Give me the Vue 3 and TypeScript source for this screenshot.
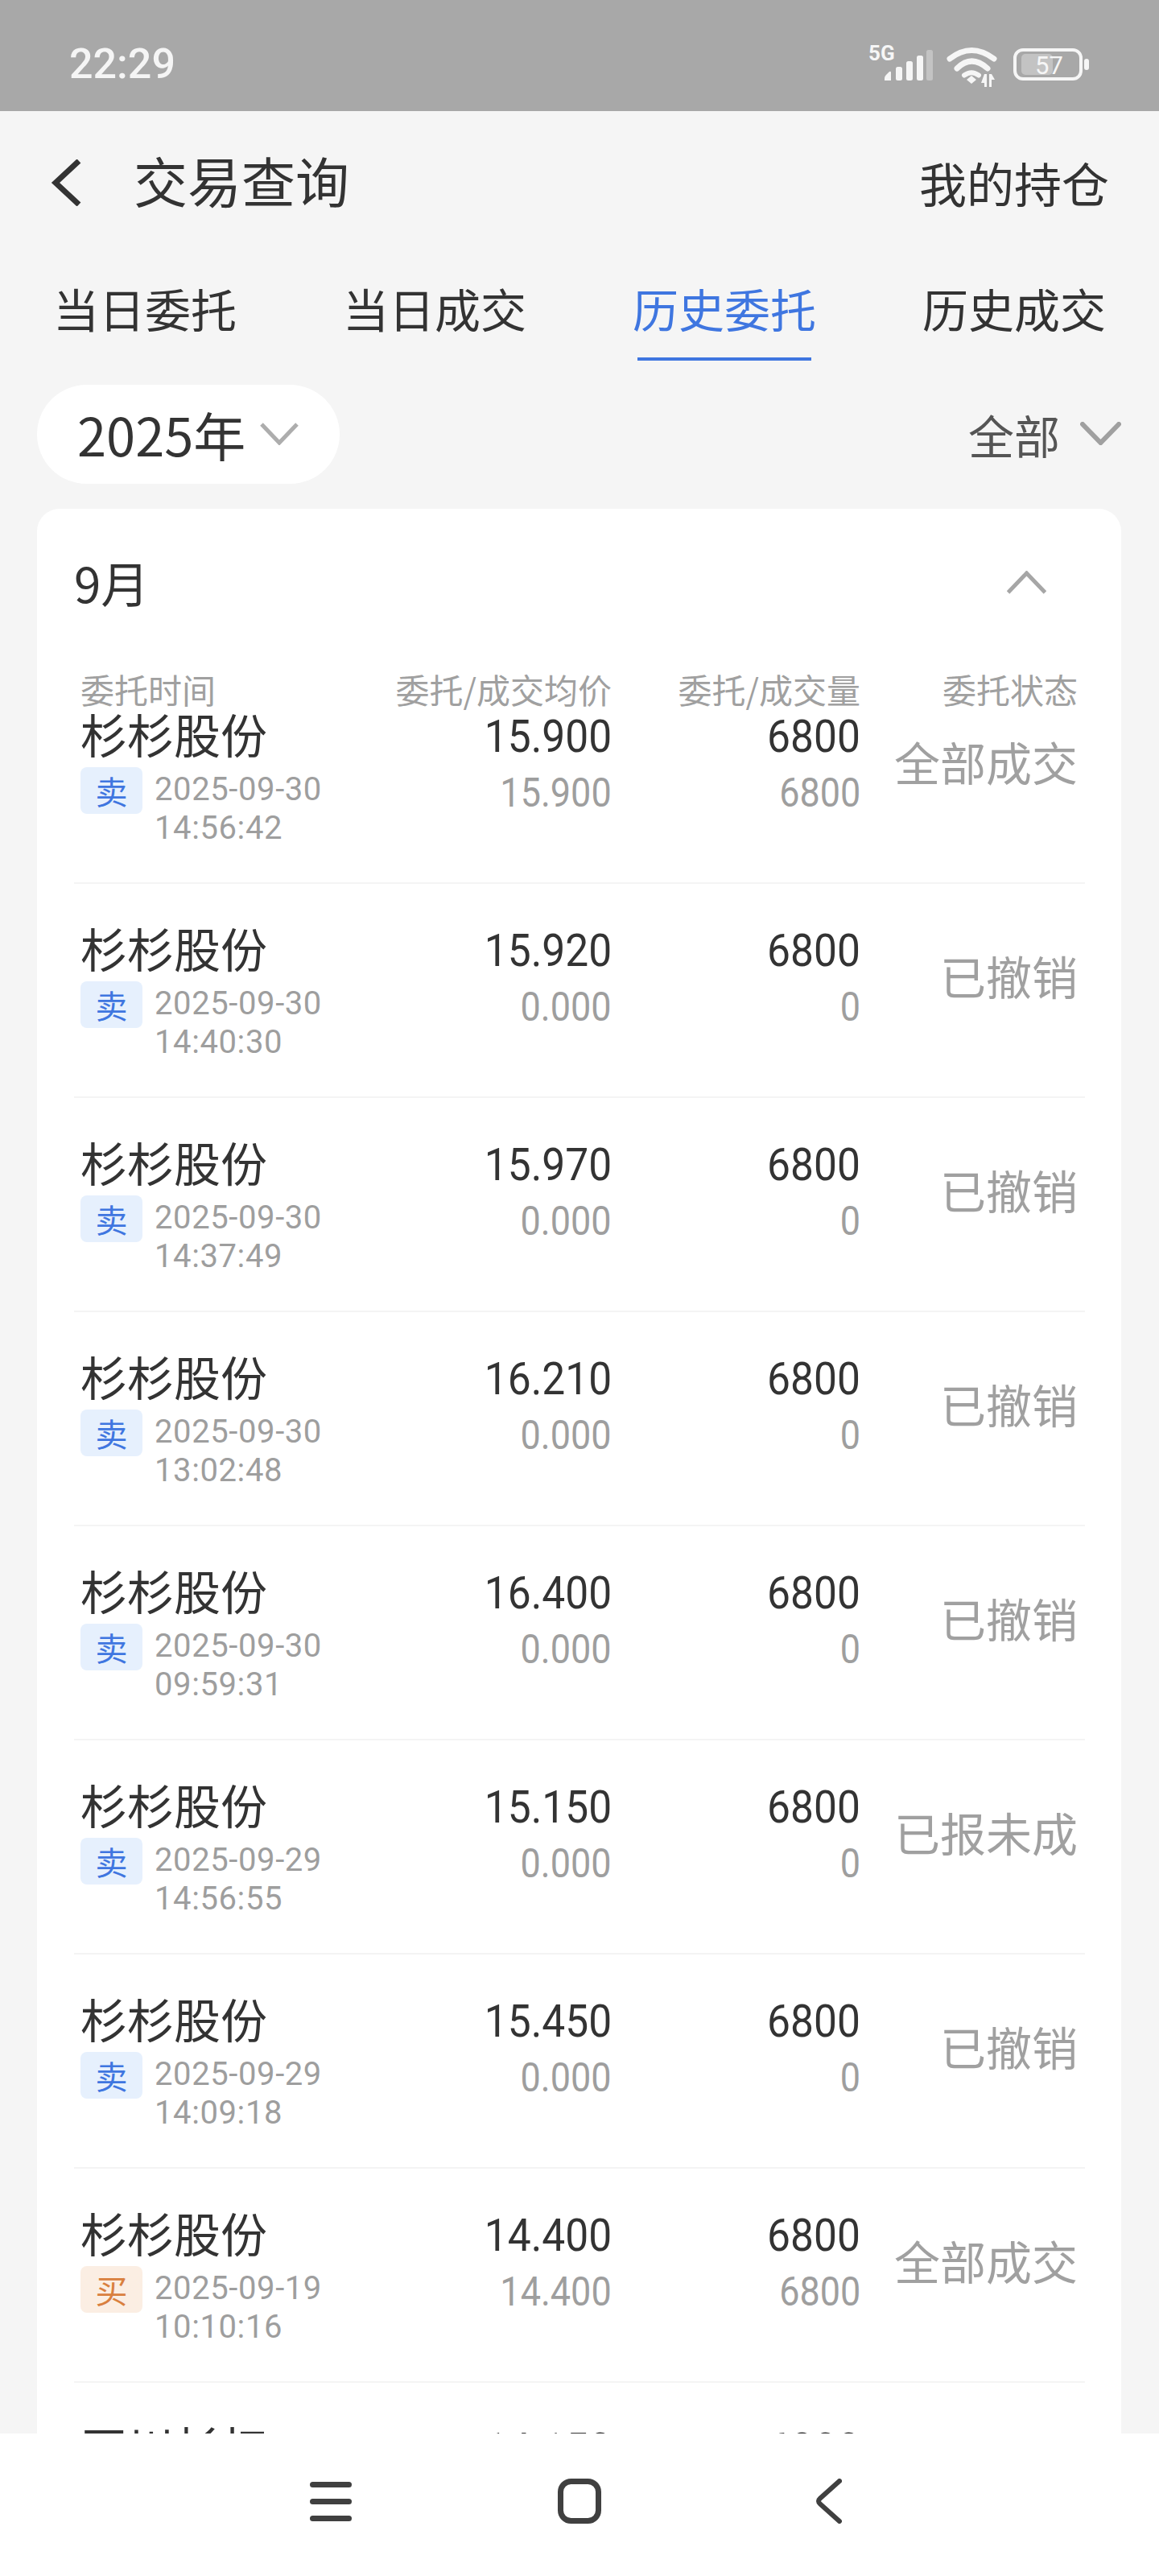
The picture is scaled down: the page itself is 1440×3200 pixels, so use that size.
<script setup lang="ts">
interface Order {
  name: string;
  side: "buy" | "sell";
  date: string;
  time: string;
  price: string;
  avg: string;
  qty: string;
  filled: string;
  status: string;
}

const tabs = ["当日委托", "当日成交", "历史委托", "历史成交"];
const activeTab = 2;
const columns = ["委托/成交均价", "委托/成交量", "委托状态"];

function sell(date: string, time: string, price: string, status = "已撤销"): Order {
  return { name: "杉杉股份", side: "sell", date, time, price, avg: "0.000", qty: "6800", filled: "0", status };
}

const orders: Order[] = [
  { ...sell("2025-09-30", "14:56:42", "15.900", "全部成交"), avg: "15.900", filled: "6800" },
  sell("2025-09-30", "14:40:30", "15.920"),
  sell("2025-09-30", "14:37:49", "15.970"),
  sell("2025-09-30", "13:02:48", "16.210"),
  sell("2025-09-30", "09:59:31", "16.400"),
  sell("2025-09-29", "14:56:55", "15.150", "已报未成"),
  sell("2025-09-29", "14:09:18", "15.450"),
  { name: "杉杉股份", side: "buy", date: "2025-09-19", time: "10:10:16", price: "14.400", avg: "14.400", qty: "6800", filled: "6800", status: "全部成交" },
  { name: "正川杉杠", side: "buy", date: "2025-09-19", time: "09:58:02", price: "14.150", avg: "14.150", qty: "6800", filled: "6800", status: "全部成交" },
];
</script>

<template>
  <div class="page">
    <div class="status-bar">
      <span class="clock">22:29</span>
      <svg class="status-icons" viewBox="1079 55 276 54" fill="none">
        <text x="1080" y="75" class="net">5G</text>
        <g fill="#f6f6f6">
          <path d="M1100 100v-3q0-2 2-4l4-4q2-1 2 1v10z" />
          <rect x="1114" y="83" width="8" height="17" rx="2.5" />
          <rect x="1127" y="76" width="8" height="24" rx="2.5" />
          <rect x="1140" y="69" width="8" height="31" rx="2.5" />
          <rect x="1152" y="62" width="8" height="38" rx="2.5" opacity="0.35" />
        </g>
        <g stroke="#f6f6f6" stroke-width="7" stroke-linecap="round">
          <path d="M1181 73Q1208 52 1236 73" />
          <path d="M1190 85Q1208 67 1228 85" />
          <path d="M1199 93.500Q1208 87 1217 93.500" stroke-width="6" />
        </g>
        <g fill="#f6f6f6">
          <path d="M1208 94l6 5-6 5-6-5z" />
          <path d="M1224 92h3v16h-3v-5h-4z" />
          <path d="M1230 92h3l4 7h-4v9h-3z" />
        </g>
        <rect x="1270" y="67" width="39" height="26" rx="5" fill="#f6f6f6" opacity="0.35" />
        <rect x="1262" y="62" width="82" height="36" rx="10" stroke="#f6f6f6" stroke-width="4" />
        <rect x="1348" y="73" width="6" height="14" rx="3" fill="#f6f6f6" />
        <text x="1287" y="92" class="level">57</text>
      </svg>
    </div>

    <div class="top-bar">
      <div class="top-left">
        <svg class="back" viewBox="0 0 40 58" fill="none">
          <path d="M36 2 7 29 36 56" stroke="#333" stroke-width="7" />
        </svg>
        <span class="title">交易查询</span>
      </div>
      <span class="holdings">我的持仓</span>
    </div>

    <div class="tabs">
      <div v-for="(tab, i) in tabs" :key="tab" class="tab" :class="{ 'is-active': i === activeTab }">
        <span class="tab-label">{{ tab }}</span>
        <span class="tab-line" />
      </div>
    </div>

    <div class="filters">
      <div class="year-pill">
        <span class="year">2025年</span>
        <svg class="chevron" viewBox="0 0 48 29" fill="none">
          <path d="M2 3 24 26 46 3" stroke="#adadad" stroke-width="5" />
        </svg>
      </div>
      <div class="filter-all">
        <span class="all-label">全部</span>
        <svg class="chevron wide" viewBox="0 0 51 29" fill="none">
          <path d="M3 3 25.500 26 48 3" stroke="#a0a0a0" stroke-width="6" stroke-linecap="round" />
        </svg>
      </div>
    </div>

    <div class="list-area">
      <section class="card">
        <div class="card-header">
          <span class="month">9月</span>
          <svg class="chevron up" viewBox="0 0 49 29" fill="none">
            <path d="M1.500 27 24.500 3 47.500 27" stroke="#a6a6a6" stroke-width="5" />
          </svg>
        </div>

        <div class="grid table-head">
          <span class="head-first">委托时间</span>
          <span v-for="col in columns" :key="col" class="head-cell">{{ col }}</span>
        </div>

        <div v-for="(o, i) in orders" :key="i" class="grid row">
          <div class="cell-name">
            <div class="name">{{ o.name }}</div>
            <div class="meta">
              <span class="badge" :class="o.side">{{ o.side === "buy" ? "买" : "卖" }}</span>
              <div class="when">
                <div>{{ o.date }}</div>
                <div>{{ o.time }}</div>
              </div>
            </div>
          </div>
          <div class="cell-num">
            <div class="main"><span>{{ o.price }}</span></div>
            <div class="sub"><span>{{ o.avg }}</span></div>
          </div>
          <div class="cell-num">
            <div class="main"><span>{{ o.qty }}</span></div>
            <div class="sub"><span>{{ o.filled }}</span></div>
          </div>
          <div class="cell-status">{{ o.status }}</div>
        </div>
      </section>
    </div>

    <div class="nav-bar">
      <svg class="nav-menu" viewBox="0 0 52 56" fill="#404040">
        <rect x="0" y="4" width="52" height="7" rx="3.500" />
        <rect x="0" y="25" width="52" height="7" rx="3.500" />
        <rect x="0" y="46" width="52" height="7" rx="3.500" />
      </svg>
      <svg class="nav-home" viewBox="0 0 54 56" fill="none">
        <rect x="3.500" y="3.500" width="47" height="49" rx="13" stroke="#404040" stroke-width="7" />
      </svg>
      <svg class="nav-back" viewBox="0 0 33 56" fill="none">
        <path d="M30 3 6 24.500Q2 28 6 31.500L30 53" stroke="#404040" stroke-width="6" stroke-linecap="round" />
      </svg>
    </div>
  </div>
</template>

<style>
html,
body {
  margin: 0;
  background: #f5f5f5;
}
</style>

<style scoped>
.page {
  width: 1440px;
  height: 3200px;
  display: flex;
  flex-direction: column;
  overflow: hidden;
  background: #f5f5f5;
  color: #333;
  font-family: "Noto Sans CJK SC", "Noto Sans", sans-serif;
}

.status-bar {
  flex: 0 0 138px;
  box-sizing: border-box;
  display: flex;
  align-items: flex-start;
  justify-content: space-between;
  padding: 0 86px;
  background: #a8a8a8;
}

.clock {
  margin-top: 49px;
  font: 500 52px/62px Roboto, sans-serif;
  color: #f5f5f5;
}

.status-icons {
  width: 276px;
  height: 54px;
  margin-top: 55px;
}

.net {
  font: 700 26px Roboto, sans-serif;
  fill: #f6f6f6;
}

.level {
  font: 400 31px Roboto, sans-serif;
  fill: #f6f6f6;
}

.top-bar {
  flex: 0 0 174px;
  display: flex;
  align-items: center;
  justify-content: space-between;
  padding: 0 62px 0 62px;
}

.top-left {
  display: flex;
  align-items: center;
  gap: 64px;
}

.back {
  width: 40px;
  height: 58px;
  margin-top: 4px;
}

.title {
  font-size: 67px;
  line-height: 90px;
  margin-top: -4px;
}

.holdings {
  font-size: 59px;
  line-height: 80px;
  margin-top: 3px;
}

.tabs {
  flex: 0 0 136px;
  display: flex;
}

.tab {
  flex: 1;
  display: flex;
  flex-direction: column;
  align-items: center;
  justify-content: space-between;
  padding-top: 30px;
  font-size: 57px;
  line-height: 80px;
}

.tab-line {
  width: 216px;
  height: 4px;
}

.tab.is-active {
  color: #3f76e0;
}

.tab.is-active .tab-line {
  background: #3f76e0;
}

.filters {
  flex: 0 0 123px;
  display: flex;
  align-items: center;
  justify-content: space-between;
  margin-top: 30px;
  padding: 0 47px 0 46px;
}

.year-pill {
  width: 376px;
  height: 123px;
  box-sizing: border-box;
  display: flex;
  align-items: center;
  gap: 18px;
  padding-left: 50px;
  border-radius: 62px;
  background: #fff;
}

.year {
  font-size: 65px;
  line-height: 90px;
  margin-top: -2px;
}

.chevron {
  flex: 0 0 auto;
  width: 48px;
  height: 29px;
  margin-top: -3px;
}

.chevron.wide {
  width: 51px;
}

.chevron.up {
  width: 49px;
  margin: -4px 48px 0 0;
}

.filter-all {
  display: flex;
  align-items: center;
  gap: 25px;
}

.all-label {
  font-size: 57px;
  line-height: 80px;
  margin-top: -2px;
  color: #555;
}

.list-area {
  flex: 1 1 0;
  min-height: 0;
  overflow: hidden;
  padding: 31px 47px 0 46px;
}

.card {
  box-sizing: border-box;
  padding: 0 45px 0 46px;
  border-radius: 28px 28px 0 0;
  background: #fff;
}

.card-header {
  height: 186px;
  display: flex;
  align-items: center;
  justify-content: space-between;
}

.month {
  font-size: 60px;
  line-height: 80px;
  margin-top: -4px;
}

.grid {
  display: grid;
  grid-template-columns: 380px 280px 309px 270px;
  padding: 0 9px 0 8px;
}

.table-head {
  height: 46px;
  margin-top: 16px;
  font-size: 42px;
  line-height: 44px;
  color: #a0a0a0;
}

.head-cell {
  text-align: right;
}

.row {
  box-sizing: border-box;
  height: 266px;
  padding-top: 48px;
  border-bottom: 2px solid #f4f4f4;
}

.table-head + .row {
  height: 218px;
  padding-top: 0;
}

.name {
  font-size: 58px;
  line-height: 70px;
  margin-top: -4px;
}

.meta {
  display: flex;
  align-items: flex-start;
  gap: 15px;
  margin-top: 7px;
}

.badge {
  flex: 0 0 77px;
  height: 58px;
  border-radius: 8px;
  font-size: 40px;
  line-height: 58px;
  text-align: center;
}

.badge.sell {
  background: #e6f0fd;
  color: #3f76e0;
}

.badge.buy {
  background: #fbeee3;
  color: #d9803f;
}

.when {
  margin-top: 4px;
  font: 400 40px/47.500px Roboto, sans-serif;
  letter-spacing: 0.6px;
  color: #9e9e9e;
}

.cell-num {
  text-align: right;
  font-family: Roboto, sans-serif;
}

.main,
.sub {
  line-height: 70px;
}

.main span,
.sub span {
  display: inline-block;
  transform-origin: right center;
}

.main {
  font-size: 56px;
  color: #333;
}

.main span {
  transform: scaleX(0.92);
}

.sub {
  font-size: 50px;
  color: #9e9e9e;
}

.sub span {
  transform: scaleX(0.9);
}

.cell-status {
  margin-top: 30px;
  font-size: 57px;
  line-height: 70px;
  text-align: right;
  color: #a0a0a0;
}

.nav-bar {
  position: relative;
  flex: 0 0 177px;
  box-sizing: border-box;
  display: flex;
  align-items: flex-start;
  padding: 56px 0 0 385px;
  background: #fff;
}

.nav-menu {
  width: 52px;
  height: 56px;
}

.nav-home {
  width: 54px;
  height: 56px;
  margin-left: 256px;
}

.nav-back {
  width: 33px;
  height: 56px;
  margin-left: 266px;
}
</style>
